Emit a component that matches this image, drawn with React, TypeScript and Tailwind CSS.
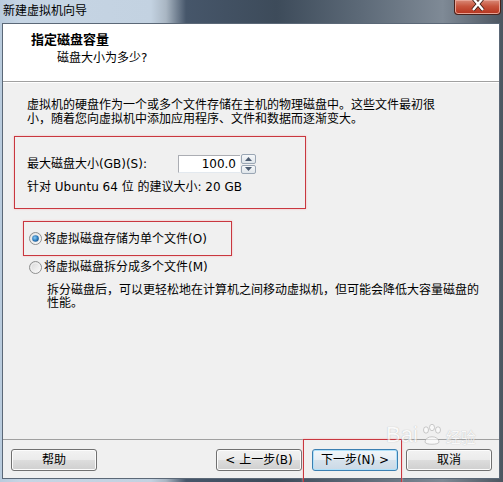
import React from "react";

const font = "font-['DejaVu_Sans','Noto_Sans_CJK_SC',sans-serif]";

function Radio({ checked }: { checked?: boolean }) {
  return (
    <svg width="13" height="13" viewBox="0 0 13 13" className="shrink-0">
      <defs>
        <linearGradient id="rbg" x1="0" y1="0" x2="1" y2="1">
          <stop offset="0" stopColor="#d4d4d4" />
          <stop offset="1" stopColor="#ffffff" />
        </linearGradient>
        <radialGradient id="rdot" cx="0.4" cy="0.4" r="0.7">
          <stop offset="0" stopColor="#8ccdf5" />
          <stop offset="0.6" stopColor="#2d7bbd" />
          <stop offset="1" stopColor="#1b4f7f" />
        </radialGradient>
      </defs>
      <circle cx="6.5" cy="6.5" r="6" fill="url(#rbg)" stroke="#8e8f8f" strokeWidth="1" />
      <circle cx="6.5" cy="6.5" r="4.5" fill="none" stroke="#f2f2f2" strokeWidth="0.8" />
      {checked && <circle cx="6.5" cy="6.5" r="3.3" fill="url(#rdot)" />}
    </svg>
  );
}

function Btn({ label, primary }: { label: string; primary?: boolean }) {
  return (
    <div
      className={`w-[86px] h-[22px] rounded-[3px] border flex items-center justify-center text-[12px] text-black ${
        primary
          ? "border-[#3c7fb1] bg-[linear-gradient(#f1f6fa_0%,#e6eef5_50%,#d6e2ec_51%,#cbd9e6_100%)] shadow-[inset_0_0_0_1px_#aee0fa]"
          : "border-[#707070] bg-[linear-gradient(#f2f2f2_0%,#ebebeb_50%,#dddddd_51%,#cfcfcf_100%)] shadow-[inset_0_0_0_1px_#fcfcfc]"
      }`}
    >
      {label}
    </div>
  );
}

export default function App() {
  return (
    <div
      className={`relative w-[503px] h-[482px] flex flex-col overflow-hidden ${font} bg-[linear-gradient(90deg,#b9cbdd_0%,#c6d5e4_4%,#c3d2e1_30%,#a9b6c3_33%,#46566a_37%,#3d4b5a_55%,#5d6a78_72%,#7f8a96_88%,#4c5560_100%)]`}
    >
      {/* title bar */}
      <div className="h-[23px] flex items-start justify-between shrink-0">
        <div className="pl-[3px] pt-[3px] text-[12px] leading-[16px] text-black">
          新建虚拟机向导
        </div>
        <div className="mr-[2px] w-[47px] h-[15px] rounded-b-[4px] border border-t-0 border-[#4a2019] bg-[linear-gradient(#d98a78_0%,#c7543d_45%,#b4321d_100%)] shadow-[inset_0_0_0_1px_#e7a496] flex items-start justify-center">
          <svg width="14" height="12" viewBox="0 0 14 12">
            <path d="M2 -2 L12 10 M12 -2 L2 10" stroke="#3a1a14" strokeWidth="4" />
            <path d="M2 -2 L12 10 M12 -2 L2 10" stroke="#ffffff" strokeWidth="2.4" />
          </svg>
        </div>
      </div>

      {/* client */}
      <div className="flex-1 ml-[2px] mr-[3px] mb-[3px] border border-[#5b6877] bg-[#f0f0f0] flex flex-col text-black text-[12px]">
        {/* header */}
        <div className="h-[58px] shrink-0 bg-white border-b border-[#a0a0a0] pl-[28px] pt-[8px]">
          <div className="text-[13px] leading-[16px] font-bold">指定磁盘容量</div>
          <div className="ml-[26px] mt-[2px] leading-[16px]">磁盘大小为多少?</div>
        </div>

        {/* body */}
        <div className="flex-1 flex flex-col border-t border-white">
          <div className="ml-[24px] mt-[15px] leading-[14px] whitespace-nowrap">
            虚拟机的硬盘作为一个或多个文件存储在主机的物理磁盘中。这些文件最初很
            <br />
            小，随着您向虚拟机中添加应用程序、文件和数据而逐渐变大。
          </div>

          <div className="ml-[11px] mt-[10px] w-[292px] h-[73px] border border-[#c9373f] shadow-[0_0_2px_#f3b6b6] pl-[12px] pt-[17px]">
            <div className="flex items-center h-[20px]">
              <div className="w-[151px]">最大磁盘大小(GB)(S):</div>
              <div className="w-[62px] h-[18px] bg-white border border-[#abadb3] border-r-0 border-b-[#e3e9ef] flex items-center justify-end pr-[4px]">
                100.0
              </div>
              <div className="w-[15px] h-[20px] flex flex-col gap-[1px] ml-[1px]">
                <div className="flex-1 border border-[#9aa6b4] rounded-[2px] bg-[linear-gradient(#f6f8fa,#dfe5ea)] flex items-center justify-center">
                  <svg width="7" height="4" viewBox="0 0 7 4">
                    <path d="M0 4 L3.5 0 L7 4 Z" fill="#4d5d72" />
                  </svg>
                </div>
                <div className="flex-1 border border-[#9aa6b4] rounded-[2px] bg-[linear-gradient(#f6f8fa,#dfe5ea)] flex items-center justify-center">
                  <svg width="7" height="4" viewBox="0 0 7 4">
                    <path d="M0 0 L3.5 4 L7 0 Z" fill="#4d5d72" />
                  </svg>
                </div>
              </div>
            </div>
            <div className="mt-[5px] leading-[16px]">针对 Ubuntu 64 位 的建议大小: 20 GB</div>
          </div>

          <div className="ml-[20px] mt-[12px] w-[209px] h-[35px] border border-[#c9373f] shadow-[0_0_2px_#f3b6b6] pl-[5px] flex items-center gap-[2px]">
            <Radio checked />
            <span>将虚拟磁盘存储为单个文件(O)</span>
          </div>

          <div className="ml-[26px] mt-[3px] h-[16px] flex items-center gap-[2px]">
            <Radio />
            <span>将虚拟磁盘拆分成多个文件(M)</span>
          </div>

          <div className="ml-[44px] mt-[9px] leading-[13px] whitespace-nowrap">
            拆分磁盘后，可以更轻松地在计算机之间移动虚拟机，但可能会降低大容量磁盘的
            <br />
            性能。
          </div>

          <div className="flex-1" />
        </div>

        {/* footer */}
        <div className="shrink-0 border-t border-[#a0a0a0] pt-[9px] pb-[7px] pl-[8px] pr-[7px] flex items-center">
          <Btn label="帮助" />
          <div className="flex-1" />
          <Btn label="< 上一步(B)" />
          <div className="w-[10px]" />
          <Btn label="下一步(N) >" primary />
          <div className="w-[8px]" />
          <Btn label="取消" />
        </div>
      </div>

      {/* annotation around next button */}
      <div className="absolute left-[303px] top-[439px] w-[99px] h-[43px] border border-b-0 border-[#c9373f] shadow-[0_0_2px_#f3b6b6]" />

      {/* watermark */}
      <div className="absolute left-[386px] top-[424px] opacity-60 text-white [text-shadow:0_0_1px_#8a8a8a] pointer-events-none flex items-end gap-[2px] font-['Liberation_Sans',sans-serif] text-[22px] leading-[22px]">
        <span>Bai</span>
        <svg width="24" height="22" viewBox="0 0 24 22">
          <g fill="#ffffff" stroke="#9a9a9a" strokeWidth="0.8">
            <ellipse cx="6" cy="6" rx="2.5" ry="3.2" />
            <ellipse cx="12" cy="3.5" rx="2.5" ry="3.2" />
            <ellipse cx="18" cy="6" rx="2.5" ry="3.2" />
            <path d="M5 18 C5 11 19 11 19 18 C19 21 5 21 5 18 Z" />
          </g>
        </svg>
        <span className="text-[15px] leading-[18px] font-['Noto_Sans_CJK_SC',sans-serif]">经验</span>
      </div>
    </div>
  );
}
